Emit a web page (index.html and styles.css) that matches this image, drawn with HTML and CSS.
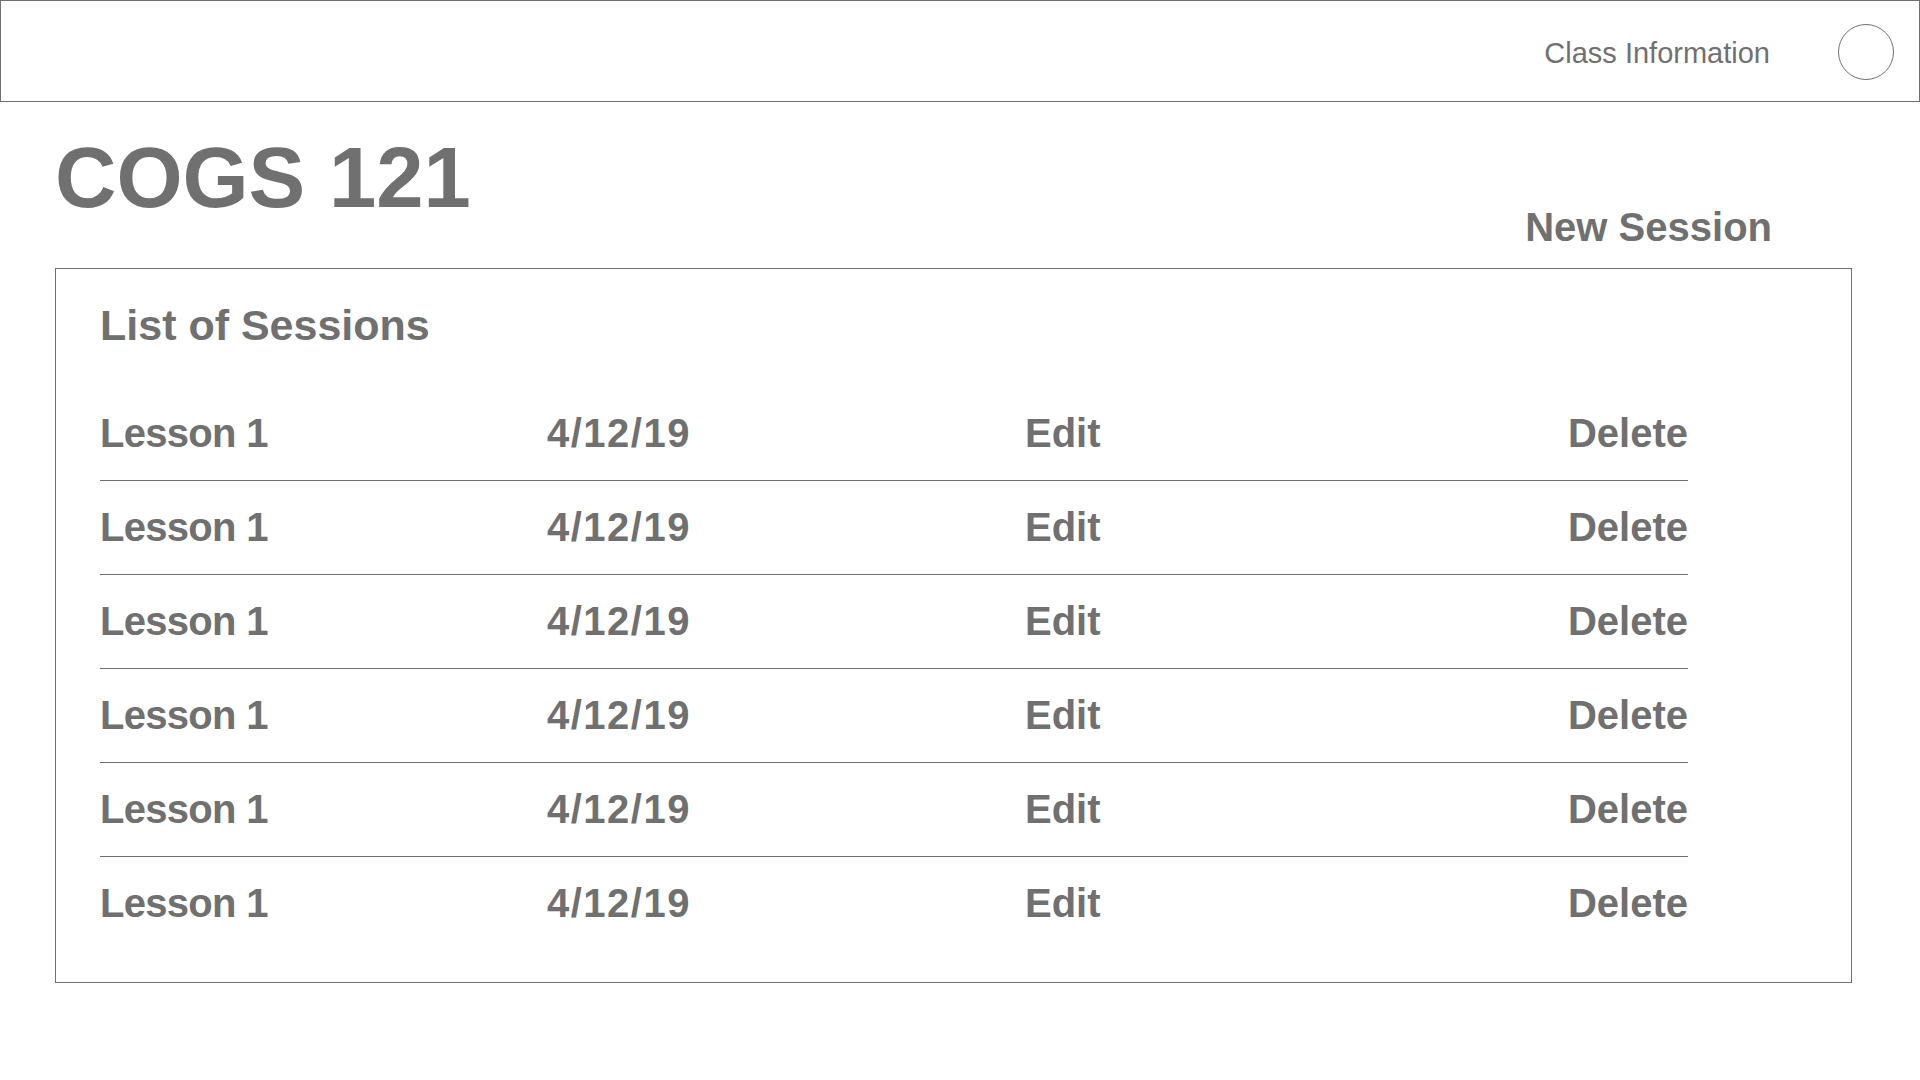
FILE: index.html
```html
<!DOCTYPE html>
<html lang="en">
<head>
<meta charset="utf-8">
<title>COGS 121</title>
<link rel="stylesheet" href="styles.css">
</head>
<body>
<header class="topbar">
  <span class="topbar-link">Class Information</span>
  <span class="avatar"></span>
</header>
<section class="heading">
  <h1 class="course-title">COGS 121</h1>
  <span class="new-session">New Session</span>
</section>
<main class="card">
  <h2 class="card-title">List of Sessions</h2>
  <div class="rows">
    <div class="row"><span class="name">Lesson 1</span><span class="date">4/12/19</span><span>Edit</span><span class="del">Delete</span></div>
    <div class="row"><span class="name">Lesson 1</span><span class="date">4/12/19</span><span>Edit</span><span class="del">Delete</span></div>
    <div class="row"><span class="name">Lesson 1</span><span class="date">4/12/19</span><span>Edit</span><span class="del">Delete</span></div>
    <div class="row"><span class="name">Lesson 1</span><span class="date">4/12/19</span><span>Edit</span><span class="del">Delete</span></div>
    <div class="row"><span class="name">Lesson 1</span><span class="date">4/12/19</span><span>Edit</span><span class="del">Delete</span></div>
    <div class="row"><span class="name">Lesson 1</span><span class="date">4/12/19</span><span>Edit</span><span class="del">Delete</span></div>
  </div>
</main>
</body>
</html>
```
FILE: styles.css
```css
* { box-sizing: border-box; }
html, body { margin: 0; padding: 0; background: #fff; }
body {
  font-family: "Liberation Sans", Arial, Helvetica, sans-serif;
  color: #707070;
}
.topbar {
  height: 102px;
  border: 1px solid #707070;
  display: flex;
  align-items: center;
  justify-content: flex-end;
  padding-right: 25px;
}
.topbar-link {
  font-size: 29px;
  line-height: 29px;
  margin-right: 68px;
  margin-top: 4px;
}
.avatar {
  width: 56px;
  height: 56px;
  border: 1px solid #707070;
  border-radius: 50%;
  margin-top: 1px;
}
.heading {
  display: flex;
  justify-content: space-between;
  align-items: flex-start;
  padding: 0 148px 0 55px;
  margin-top: 34px;
}
.course-title {
  margin: 0;
  font-size: 85px;
  line-height: 84px;
  font-weight: 700;
}
.new-session {
  font-size: 40px;
  line-height: 40px;
  font-weight: 700;
  margin-top: 71px;
}
.card {
  margin: 21px 68px 0 55px;
  border: 1px solid #707070;
  padding: 35px 0 32px 44px;
}
.card-title {
  margin: 0;
  font-size: 43px;
  line-height: 43px;
  font-weight: 700;
}
.rows {
  margin-top: 66px;
  width: 1588px;
}
.row {
  display: grid;
  grid-template-columns: 447px 478px 1fr auto;
  font-size: 40px;
  line-height: 40px;
  font-weight: 700;
  padding: 26px 0 27px;
  border-bottom: 1px solid #707070;
}
.row:first-child { padding-top: 0; height: 68px; }
.row:last-child { border-bottom: none; }
.name { letter-spacing: -0.7px; }
.date { letter-spacing: 1.5px; }
.del { text-align: right; }
```
